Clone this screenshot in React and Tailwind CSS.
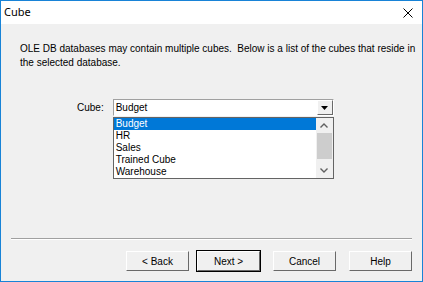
import React from "react";

function Btn({ label, isDefault, className = "" }) {
  return (
    <div className={(isDefault ? "border border-[#000] " : "border border-transparent ") + className}>
      <div className="w-[63px] h-[20px] bg-[#f0f0f0] border-t border-l border-t-white border-l-white border-b border-r border-b-[#696969] border-r-[#696969] flex items-center justify-center text-[10px] text-black">
        {label}
      </div>
    </div>
  );
}

function App() {
  const cubes = ["Budget", "HR", "Sales", "Trained Cube", "Warehouse"];

  return (
    <div className="w-[423px] h-[282px] border border-[#1883d7] bg-[#f0f0f0] flex flex-col overflow-hidden" style={{ fontFamily: "'Liberation Sans', Arial, sans-serif" }}>
      {/* Title bar */}
      <div className="h-[23px] bg-white flex items-center justify-between pl-[3px] pr-[9px]">
        <span className="text-[11px] text-black" style={{ fontFamily: "'Noto Sans', 'Open Sans', sans-serif" }}>Cube</span>
        <svg width="10" height="10" viewBox="0 0 10 10">
          <path d="M0.5 0.5 L9.5 9.5 M9.5 0.5 L0.5 9.5" stroke="#000" strokeWidth="1" />
        </svg>
      </div>

      {/* Body */}
      <div className="flex-1 flex flex-col">
        <p className="pl-[19px] pr-[4px] pt-[18px] text-[10px] leading-[14px] text-black">
          OLE DB databases may contain multiple cubes.&nbsp; Below is a list of the cubes that reside in the selected database.
        </p>

        <div className="flex mt-[29px] pl-[76px] gap-[9px]">
          <span className="text-[10px] leading-[14px] pt-[2px] text-black">Cube:</span>
          <div className="flex flex-col w-[221px]">
            {/* combobox */}
            <div className="h-[17px] flex bg-white border-t border-l border-[#a0a0a0] border-b border-r border-b-white border-r-white">
              <div className="flex-1 text-[10px] leading-[14px] pl-[2px] pt-[1px] text-black">Budget</div>
              <div className="w-[16px] h-[15px] bg-[#f0f0f0] border border-t-white border-l-white border-b-[#696969] border-r-[#696969] flex items-center justify-center">
                <svg width="7" height="4" viewBox="0 0 7 4">
                  <path d="M0 0 H7 L3.5 4 Z" fill="#000" />
                </svg>
              </div>
            </div>
            {/* list */}
            <div className="mt-[1px] h-[62px] flex bg-white border border-[#646464] overflow-hidden">
              <div className="flex-1 flex flex-col">
                {cubes.map((c, i) => (
                  <div
                    key={c}
                    className={
                      i === 0
                        ? "h-[12px] shrink-0 text-[10px] leading-[12px] pl-[2px] bg-[#0078d7] text-white"
                        : "h-[12px] shrink-0 text-[10px] leading-[12px] pl-[2px] text-black"
                    }
                  >
                    {c}
                  </div>
                ))}
              </div>
              <div className="w-[17px] bg-[#f0f0f0] flex flex-col">
                <div className="h-[15px] flex items-center justify-center">
                  <svg width="8" height="5" viewBox="0 0 8 5">
                    <path d="M0.5 4.5 L4 1 L7.5 4.5" stroke="#606060" strokeWidth="1.4" fill="none" />
                  </svg>
                </div>
                <div className="h-[26px] mx-[1px] bg-[#cdcdcd]" />
                <div className="flex-1" />
                <div className="h-[15px] flex items-center justify-center">
                  <svg width="8" height="5" viewBox="0 0 8 5">
                    <path d="M0.5 0.5 L4 4 L7.5 0.5" stroke="#606060" strokeWidth="1.4" fill="none" />
                  </svg>
                </div>
              </div>
            </div>
          </div>
        </div>

        <div className="flex-1" />

        {/* separator */}
        <div className="mx-[10px] border-t border-[#a0a0a0] border-b border-b-white" />

        {/* buttons */}
        <div className="flex justify-end pr-[9px] pt-[10px] pb-[9px]">
          <Btn label="< Back" />
          <Btn label="Next >" isDefault className="ml-[6px]" />
          <Btn label="Cancel" className="ml-[11px]" />
          <Btn label="Help" className="ml-[11px]" />
        </div>
      </div>
    </div>
  );
}

export default App;
